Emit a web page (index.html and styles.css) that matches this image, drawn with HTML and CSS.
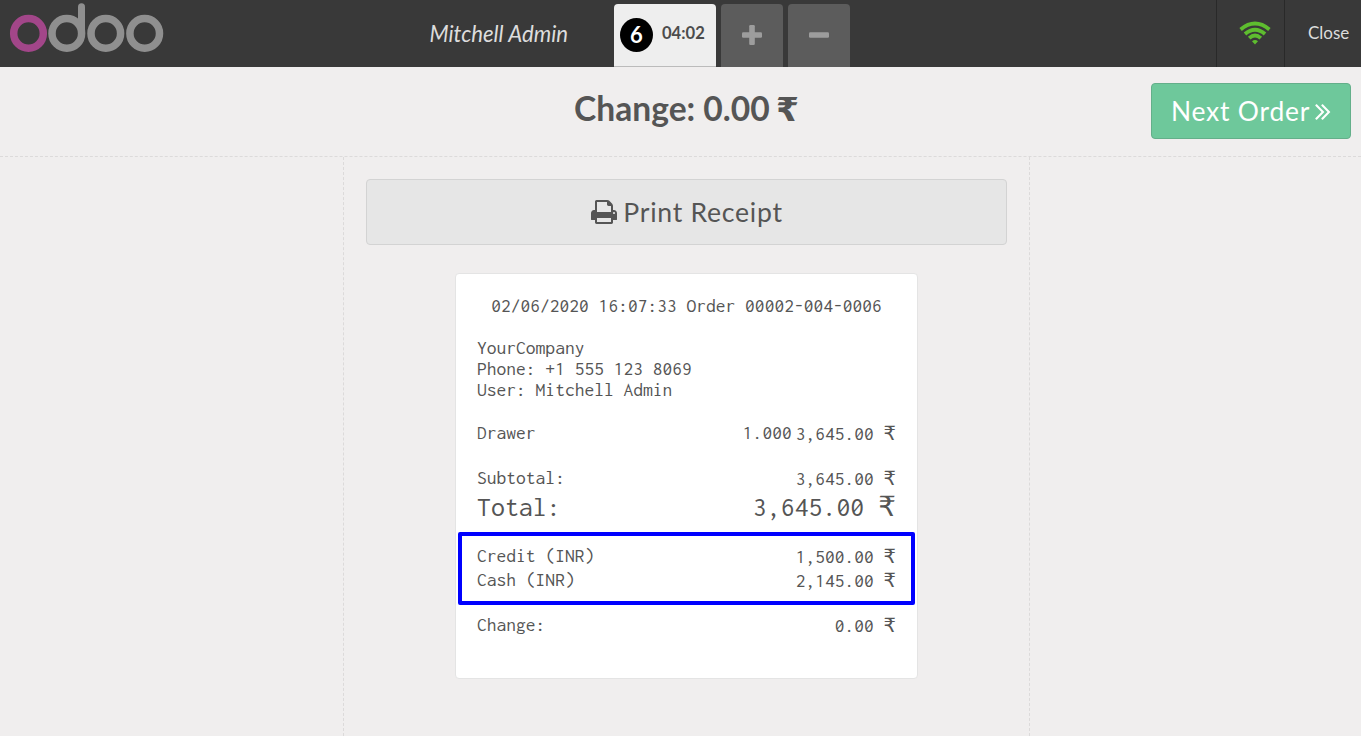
FILE: index.html
```html
<!DOCTYPE html>
<html lang="en">
<head>
<meta charset="utf-8">
<title>Point of Sale</title>
<link rel="stylesheet" href="styles.css">
</head>
<body>
<div class="pos">
  <header class="topbar">
    <div class="branding">
      <svg class="logo" width="156" height="52" viewBox="9 1 156 52" fill="none" stroke="#8f8f8f" stroke-width="7.5">
        <circle cx="28.5" cy="33.4" r="14.8" stroke="#a24689"/>
        <circle cx="66.8" cy="33.4" r="14.8"/>
        <path d="M81.5 34V6.8" stroke-width="7" stroke-linecap="round"/>
        <circle cx="105.8" cy="33.4" r="14.8"/>
        <circle cx="144.7" cy="33.4" r="14.8"/>
      </svg>
      <span class="username">Mitchell Admin</span>
    </div>
    <nav class="orders">
      <button class="tab selected"><span class="seq">6</span><span class="time">04:02</span></button>
      <button class="tab square"><svg width="20" height="20" viewBox="0 0 20 20" fill="#9d9d9d"><rect y="7.2" width="20" height="5.6" rx="1.2"/><rect x="7.2" width="5.6" height="20" rx="1.2"/></svg></button>
      <button class="tab square"><svg width="20" height="20" viewBox="0 0 20 20" fill="#9d9d9d"><rect y="7.2" width="20" height="5.6" rx="1.2"/></svg></button>
    </nav>
    <div class="status">
      <div class="wifi">
        <svg width="32" height="24" viewBox="0 0 32 24" fill="none" stroke="#5ebd2f" stroke-width="3.8">
          <path d="M1.6 8.5Q16 -3.4 30.4 8.5"/>
          <path d="M6 13Q16 4.4 26 13"/>
          <path d="M10.2 17.2Q16 12 21.8 17.2"/>
          <path d="M13 20.2Q16 17.8 19 20.2L16 23.4Z" fill="#5ebd2f" stroke="none"/>
        </svg>
      </div>
      <div class="close">Close</div>
    </div>
  </header>
  <section class="title">
    <h1>Change: 0.00 <span class="rs">₹</span></h1>
    <button class="next"><span>Next Order</span><svg width="28" height="28" viewBox="0 0 1792 1792" fill="#fff"><path d="M979 960q0 13-10 23l-466 466q-10 10-23 10t-23-10l-50-50q-10-10-10-23t10-23l393-393-393-393q-10-10-10-23t10-23l50-50q10-10 23-10t23 10l466 466q10 10 10 23zm384 0q0 13-10 23l-466 466q-10 10-23 10t-23-10l-50-50q-10-10-10-23t10-23l393-393-393-393q-10-10-10-23t10-23l50-50q10-10 23-10t23 10l466 466q10 10 10 23z"/></svg></button>
  </section>
  <main class="content">
    <div class="column">
      <button class="print"><svg width="28" height="28" viewBox="0 0 1792 1792" fill="#555"><path d="M448 1536h896v-256h-896v256zm0-640h896v-384h-160q-40 0-68-28t-28-68v-160h-640v640zm1152 64q0-26-19-45t-45-19-45 19-19 45 19 45 45 19 45-19 19-45zm128 0v416q0 13-9.5 22.5t-22.5 9.5h-224v160q0 40-28 68t-68 28h-960q-40 0-68-28t-28-68v-160h-224q-13 0-22.5-9.5t-9.5-22.5v-416q0-79 56.5-135.5t135.5-56.5h64v-544q0-40 28-68t68-28h672q40 0 88 20t76 48l152 152q28 28 48 76t20 88v256h64q79 0 135.5 56.5t56.5 135.5z"/></svg><span>Print Receipt</span></button>
      <article class="receipt">
        <div class="order">02/06/2020 16:07:33 Order 00002-004-0006</div>
        <div class="company">YourCompany<br>Phone: +1 555 123 8069<br>User: Mitchell Admin</div>
        <div class="row lines"><span>Drawer</span><span class="qty">1.000</span><span class="amt">3,645.00 <span class="rs">₹</span></span></div>
        <div class="row"><span>Subtotal:</span><span class="amt">3,645.00 <span class="rs">₹</span></span></div>
        <div class="row total"><span>Total:</span><span class="amt">3,645.00 <span class="rs">₹</span></span></div>
        <div class="payments">
          <div class="row"><span>Credit (INR)</span><span class="amt">1,500.00 <span class="rs">₹</span></span></div>
          <div class="row"><span>Cash (INR)</span><span class="amt">2,145.00 <span class="rs">₹</span></span></div>
        </div>
        <div class="row"><span>Change:</span><span class="amt">0.00 <span class="rs">₹</span></span></div>
      </article>
    </div>
  </main>
</div>
</body>
</html>
```
FILE: styles.css
```css
* { box-sizing: border-box; }
body { margin: 0; font-family: Lato, sans-serif; color: #555; background: #f0eeee; }
button { font: inherit; color: inherit; border: 0; padding: 0; margin: 0; }
svg { display: block; flex: none; }
.pos { height: 736px; display: flex; flex-direction: column; overflow: hidden; }

.topbar { height: 67px; flex: none; display: flex; background: #393939; }
.branding { width: 614px; display: flex; justify-content: space-between; padding: 1px 46px 0 9px; }
.username { font-size: 22.2px; font-style: italic; line-height: 65px; color: #ddd; white-space: nowrap; }
.orders { flex: 1; display: flex; gap: 5px; padding-top: 4px; }
.tab { height: 63px; border-radius: 4px 4px 0 0; display: flex; align-items: center; background: #5c5c5c; }
.tab.selected { width: 102px; padding: 0 0 1px 6px; background: #eee; border-bottom: 1px solid #bbb; }
.seq { width: 33px; height: 34px; border-radius: 50%; background: #000; color: #fff; font-size: 22px; font-weight: 700; line-height: 34px; text-align: center; }
.time { margin: -3px 0 0 9px; font-size: 16.6px; font-weight: 700; color: #4c4c4c; }
.tab.square { width: 62px; padding-bottom: 1px; justify-content: center; }
.status { display: flex; }
.wifi { width: 68px; border-left: 1px solid #292929; padding: 21px 0 0 22px; }
.close { width: 77px; border-left: 1px solid #292929; padding-left: 23px; line-height: 65px; font-size: 17px; color: #ddd; }

.title { height: 90px; flex: none; display: grid; grid-template-columns: 1fr auto 1fr; border-bottom: 1px dashed #dcdada; padding: 0 10px; }
h1 { grid-column: 2; margin: 0 -3px 0 9px; font-size: 33.6px; line-height: 82px; white-space: nowrap; }
h1 .rs { font-family: "DejaVu Sans", sans-serif; font-size: 33px; line-height: 1; margin-left: -2px; }
.next { width: 200px; height: 56px; margin-top: 16px; justify-self: end; display: flex; align-items: center; padding-left: 19px; font-size: 26.4px; letter-spacing: 0.8px; color: #fff; background: #6ec89b; border: 1px solid #64af8a; border-radius: 4px; white-space: nowrap; }
.next span { width: 138px; }

.content { flex: 1; display: flex; justify-content: center; padding-left: 12px; }
.column { width: 687px; border: 1px dashed #dcdada; border-width: 0 1px; display: flex; flex-direction: column; align-items: center; padding-top: 22px; }
.print { width: 641px; height: 66px; display: flex; align-items: center; justify-content: center; gap: 5px; font-size: 26.6px; letter-spacing: 0.75px; background: #e6e6e6; border: 1px solid #d3d3d3; border-radius: 4px; }

.receipt { width: 463px; height: 406px; margin-top: 28px; padding: 21px 21px 0; background: #fff; border: 1px solid #e4e4e4; border-radius: 4px; font-family: Inconsolata, "DejaVu Sans Mono", monospace; font-size: 19.54px; line-height: 21px; }
.order { text-align: center; }
.company { margin: 21px 0 21px; }
.row { height: 24px; display: flex; justify-content: space-between; line-height: 24px; white-space: nowrap; }
.amt { padding-top: 1px; }
.receipt .rs { font-family: "DejaVu Sans", sans-serif; font-size: 1em; line-height: 1; }
.lines { margin-bottom: 21px; }
.qty { margin: 0 4px 0 auto; }
.total { height: 36px; font-size: 27.9px; line-height: 34px; }
.total .amt { padding: 0; }
.payments { height: 73px; margin: 6px -19px 8px -19px; padding: 8px 15px 0 15px; border: 4px solid #00f; border-radius: 2px; }
```
